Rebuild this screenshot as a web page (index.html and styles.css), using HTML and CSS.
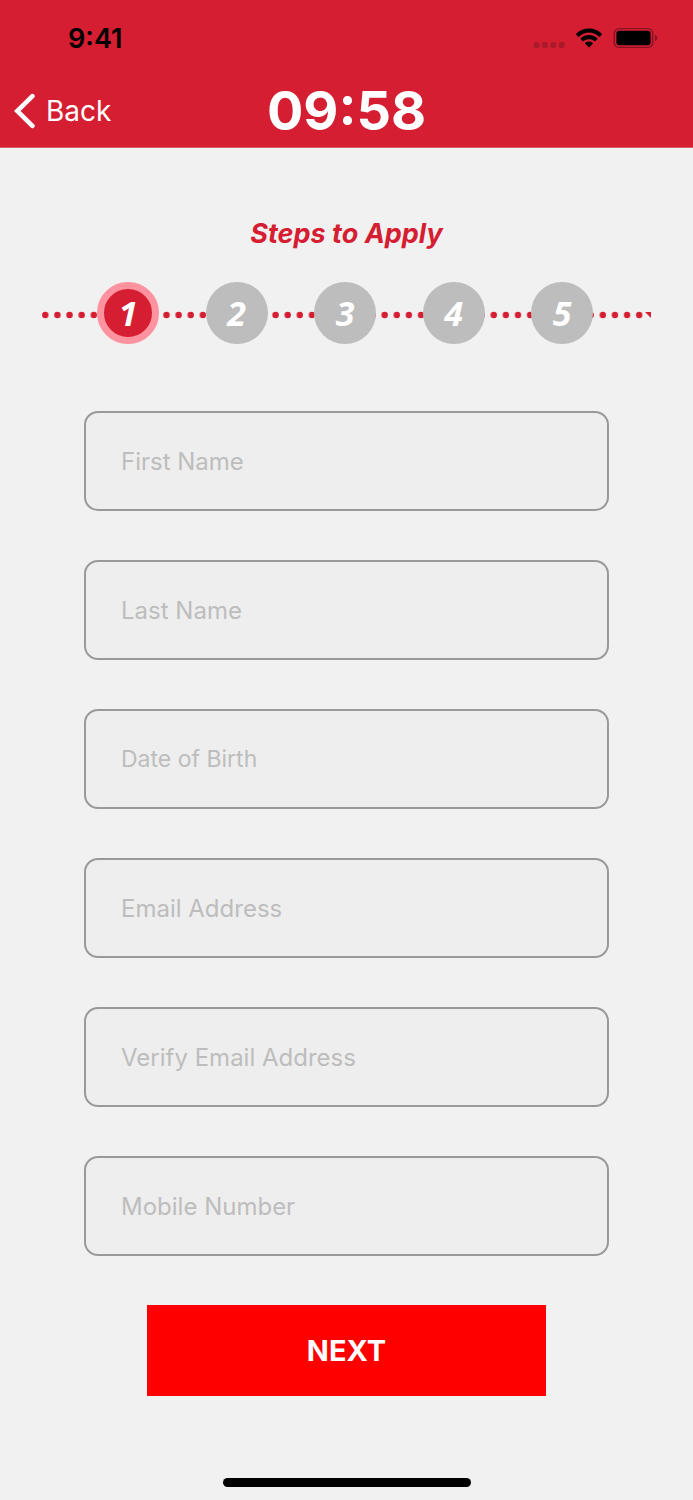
FILE: index.html
```html
<!DOCTYPE html>
<html lang="en">
<head>
<meta charset="utf-8">
<meta name="viewport" content="width=device-width, initial-scale=1">
<title>Steps to Apply</title>
<link rel="stylesheet" href="styles.css">
</head>
<body>
<div class="screen">
  <header class="header">
    <div class="status">
      <span class="clock">9:41</span>
      <span class="status-icons">
        <svg class="signal" width="32" height="8" viewBox="0 0 32 8" aria-hidden="true">
          <rect x="0.5" y="1" width="6" height="6" rx="2"/>
          <rect x="8.9" y="1" width="6" height="6" rx="2"/>
          <rect x="17.3" y="1" width="6" height="6" rx="2"/>
          <rect x="25.7" y="1" width="6" height="6" rx="2"/>
        </svg>
        <svg class="wifi" width="28" height="22" viewBox="0 0 28 22" aria-hidden="true">
          <path d="M1.3 7.7 Q0.7 7 1.4 6.4 C8.6-0.3 19.4-0.3 26.6 6.4 Q27.3 7 26.7 7.7 L25 9.4 Q24.5 9.9 23.9 9.4 C18.2 4.3 9.8 4.3 4.1 9.4 Q3.5 9.9 3 9.4Z"/>
          <path d="M5.8 12.2 Q5.2 11.6 5.9 11 C10.6 7 17.4 7 22.1 11 Q22.8 11.6 22.2 12.2 L20.4 14 Q19.9 14.4 19.3 14 C16.2 11.5 11.8 11.5 8.7 14 Q8.1 14.4 7.6 14Z"/>
          <path d="M10.3 16.7 Q9.8 16.2 10.4 15.7 C12.5 14.1 15.5 14.1 17.6 15.7 Q18.2 16.2 17.7 16.7 L14.5 20 Q14 20.5 13.5 20Z"/>
        </svg>
        <svg class="battery" width="46" height="22" viewBox="0 0 46 22" aria-hidden="true">
          <rect class="battery-shell" x="1.2" y="1.6" width="38.6" height="18.8" rx="5"/>
          <rect x="3.4" y="3.8" width="34.2" height="14.4" rx="3"/>
          <path class="battery-cap" d="M42 7.8c3 1.4 3 5 0 6.4z"/>
        </svg>
      </span>
    </div>
    <nav class="nav">
      <a class="back" href="#">
        <svg width="22" height="36" viewBox="0 0 22 36" aria-hidden="true"><path d="M18.4 3.2L3.2 18L18.4 32.8"/></svg>
        <span>Back</span>
      </a>
      <div class="timer" role="timer">09:58</div>
    </nav>
  </header>

  <main class="content">
    <h1 class="title">Steps to Apply</h1>
    <div class="stepper">
      <svg class="dots" aria-hidden="true">
        <defs>
          <pattern id="dot" width="12.12" height="8" patternUnits="userSpaceOnUse"><circle cx="3.3" cy="4" r="3.2"/></pattern>
        </defs>
        <rect width="100%" height="8" fill="url(#dot)"/>
      </svg>
      <svg class="dots-end" width="6" height="8" viewBox="0 0 6 8" aria-hidden="true"><path d="M0 1H6V7Z"/></svg>
      <ol class="steps">
        <li class="step step-current" aria-current="step">1</li>
        <li class="step">2</li>
        <li class="step">3</li>
        <li class="step">4</li>
        <li class="step">5</li>
      </ol>
    </div>

    <form class="form">
      <input class="field" type="text" placeholder="First Name" aria-label="First Name">
      <input class="field" type="text" placeholder="Last Name" aria-label="Last Name">
      <input class="field field-date" type="text" placeholder="Date of Birth" aria-label="Date of Birth">
      <input class="field" type="email" placeholder="Email Address" aria-label="Email Address">
      <input class="field" type="email" placeholder="Verify Email Address" aria-label="Verify Email Address">
      <input class="field" type="tel" placeholder="Mobile Number" aria-label="Mobile Number">
      <button class="next" type="button">NEXT</button>
    </form>
  </main>
  <div class="home-bar"></div>
</div>
</body>
</html>
```
FILE: styles.css
```css
* {
  box-sizing: border-box;
}

body {
  margin: 0;
  background: #f1f1f1;
  font-family: Inter, "Liberation Sans", sans-serif;
}

.screen {
  display: flex;
  flex-direction: column;
  min-height: 100vh;
}

.header {
  background: #d51e32;
  padding: 16px 0 0;
  border-bottom: 1px solid #dd5b68;
}

.status {
  display: flex;
  align-items: center;
  justify-content: space-between;
  height: 44px;
  padding: 0 34px 0 68px;
}

.clock {
  font-size: 27px;
  font-weight: 600;
  color: #000;
}

.status-icons {
  display: flex;
  align-items: center;
  gap: 10px;
}

.signal {
  margin-top: 14px;
  fill: #a91b2b;
}

.battery-shell {
  fill: none;
  stroke: #861523;
  stroke-width: 1.4;
}

.battery-cap {
  fill: #861523;
}

.nav {
  display: grid;
  grid-template-columns: 1fr auto 1fr;
  align-items: center;
  height: 87px;
  padding: 15px 14px 0;
}

.back {
  display: flex;
  align-items: center;
  gap: 10px;
  color: #fff;
  font-size: 28px;
  text-decoration: none;
}

.back path {
  fill: none;
  stroke: #fff;
  stroke-width: 4.6;
  stroke-linecap: round;
}

.timer {
  color: #fff;
  font-size: 54px;
  font-weight: 700;
  line-height: 64px;
}

.content {
  flex: 1;
}

.title {
  margin: 0;
  padding-top: 68px;
  color: #d51e32;
  font-size: 27px;
  font-style: italic;
  font-weight: 700;
  line-height: 36px;
  text-align: center;
}

.stepper {
  position: relative;
  margin: 30px 42px 0;
  padding: 0 58px 0 55px;
}

.dots {
  position: absolute;
  top: 29px;
  left: 0;
  width: calc(100% - 6px);
  height: 8px;
  fill: #d51e32;
}

.dots-end {
  position: absolute;
  top: 29px;
  right: 0;
  fill: #d51e32;
}

.steps {
  position: relative;
  display: flex;
  justify-content: space-between;
  margin: 0;
  padding: 0;
  list-style: none;
}

.step {
  display: flex;
  align-items: center;
  justify-content: center;
  width: 62px;
  height: 62px;
  border-radius: 50%;
  background: #bdbdbd;
  color: #fff;
  font: italic 700 34px "Open Sans", "Noto Sans", sans-serif;
}

.step-current {
  border: 7px solid #ff929f;
  background: #d51e32;
}

.form {
  display: flex;
  flex-direction: column;
  gap: 49px;
  padding: 67px 84px 0;
}

.field {
  width: 100%;
  height: 100px;
  padding: 0 35px;
  border: 2px solid #999;
  border-radius: 14px;
  background: #eee;
  color: #333;
  font-family: inherit;
  font-size: 24px;
}

.field-date {
  font-size: 23px;
}

.field::placeholder {
  color: #bdbdbd;
  opacity: 1;
}

.next {
  height: 91px;
  margin: 0 63px;
  border: 0;
  background: #f00;
  color: #fff;
  font-family: inherit;
  font-size: 29px;
  font-weight: 700;
}

.home-bar {
  width: 248px;
  height: 9px;
  margin: 40px auto 13px;
  border-radius: 5px;
  background: #000;
}
```
